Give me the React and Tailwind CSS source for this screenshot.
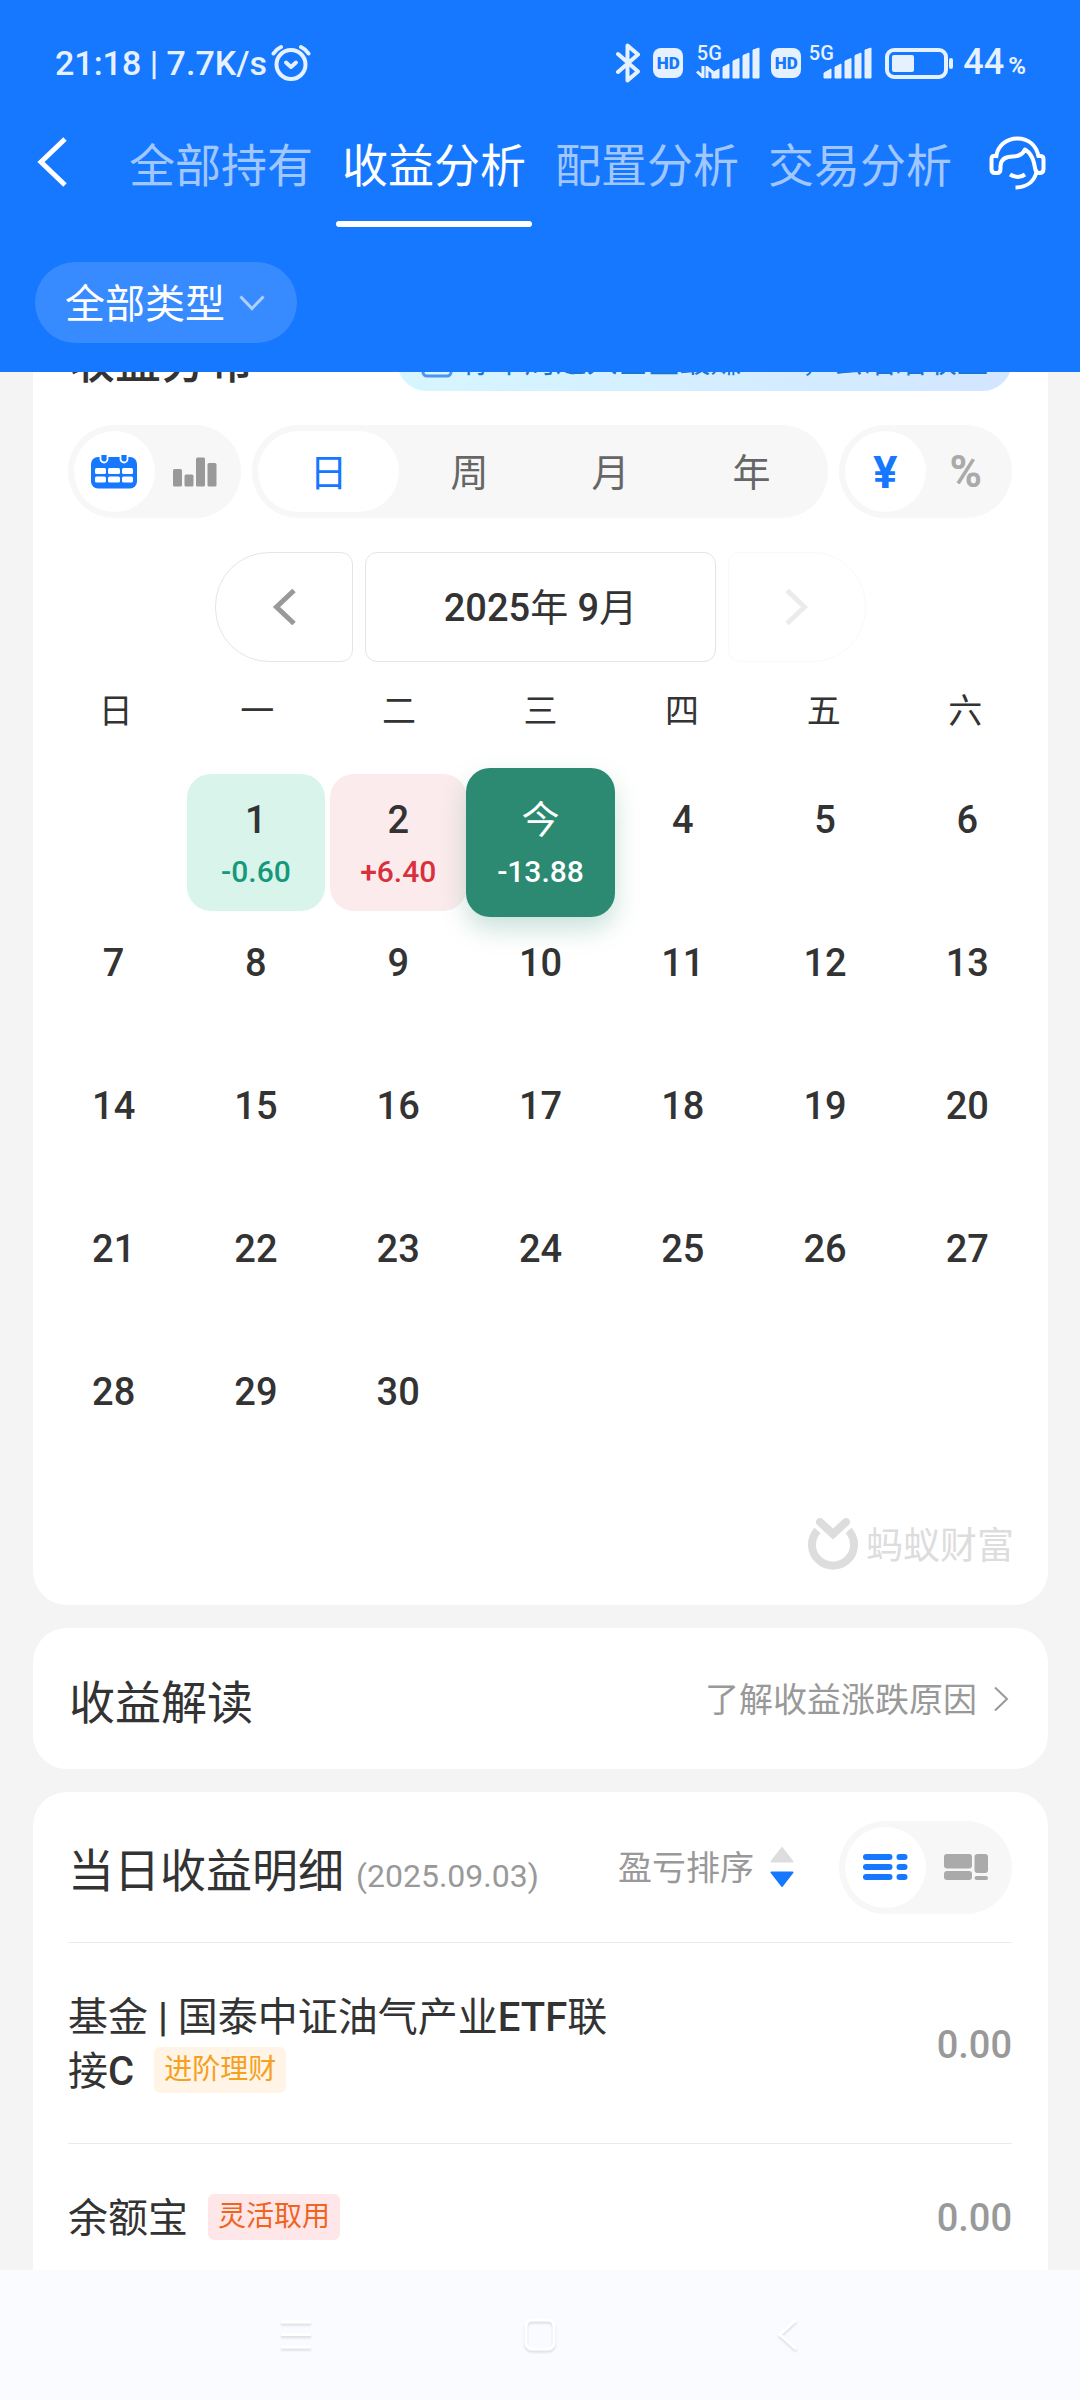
import React from "react";

const BLUE = "#1677ff";

function AlarmIcon() {
  return (
    <svg width="40" height="38" viewBox="0 0 40 38" fill="none" stroke="#e6f1ff" strokeLinecap="round">
      <circle cx="20" cy="20.5" r="14.5" strokeWidth="4" />
      <path d="M2.500 9.500 Q5.500 5 10 3 M37.500 9.500 Q34.500 5 30 3" strokeWidth="4" />
      <path d="M15 18.500 L20 23 L25 18.500" strokeWidth="4" strokeLinejoin="round" />
    </svg>
  );
}

function BluetoothIcon() {
  return (
    <svg width="26" height="40" viewBox="0 0 26 40" fill="none" stroke="#e6f1ff" strokeWidth="4" strokeLinecap="round" strokeLinejoin="round">
      <path d="M3 11 L23 28.500 L12.500 37.500 V2.500 L23 11.500 L3 29" />
    </svg>
  );
}

function HdBadge() {
  return (
    <span className="flex h-[30px] w-[30px] items-center justify-center rounded-lg bg-[#e6f1ff] text-[17px] font-black leading-none text-[#1677ff]">
      HD
    </span>
  );
}

function Signal({ data }) {
  return (
    <span className="flex items-end">
      <span className="-mt-1 flex w-7 flex-col items-center gap-[3px] self-start text-xl font-medium leading-none">
        5G
        {data && (
          <svg className="-ml-2" width="18" height="12" viewBox="0 0 18 12" fill="none" stroke="#e6f1ff" strokeWidth="3">
            <path d="M7 0 V11 L1 5.500 M11 12 V1.500 L17 6.500" />
          </svg>
        )}
      </span>
      <svg className="-ml-3" width="50" height="32" viewBox="0 0 50 32" fill="#e6f1ff">
        <path d="M1 26 L8 22 V31 H1 Z" stroke="#e6f1ff" strokeLinejoin="round" />
        <path d="M12 20 L18 17 V31 H12 Z" stroke="#e6f1ff" strokeLinejoin="round" />
        <path d="M22 14 L28 11.500 V31 H22 Z" stroke="#e6f1ff" strokeLinejoin="round" />
        <path d="M32 8.500 L38 6 V31 H32 Z" stroke="#e6f1ff" strokeLinejoin="round" />
        <path d="M42 3 L48 1 V31 H42 Z" stroke="#e6f1ff" strokeLinejoin="round" />
      </svg>
    </span>
  );
}

function BatteryIcon() {
  return (
    <svg width="70" height="32" viewBox="0 0 70 32" fill="none">
      <rect x="2" y="3" width="59" height="27" rx="7" stroke="#e6f1ff" strokeWidth="4" />
      <rect x="7" y="8" width="22" height="17" rx="2" fill="#e6f1ff" />
      <rect x="64" y="11" width="4" height="11" rx="2" fill="#e6f1ff" />
    </svg>
  );
}

function HeadsetIcon() {
  return (
    <svg width="57" height="54" viewBox="0 0 57 54" fill="none" stroke="#fff" strokeWidth="4" strokeLinejoin="round">
      <path d="M7 22 C8 10 17 2.500 28.500 2.500 C40 2.500 48 10 49.500 21" />
      <path d="M7 20 H5 Q2.500 20 2.500 23 V33 Q2.500 37 6 37 H8 Q11.500 37 11.500 33 V30 Q12 20.500 24 20.500 Q32.500 20.500 36 13.500 Q43 18 45 27 Q46 32 46.500 34 Q47.500 37 50.500 37 Q54.500 37 54.500 33 V23 Q54.500 20 51 20 H48" />
      <path d="M47.500 36 C45 46 37 51.500 26.500 51.500" />
      <path d="M21 38.500 Q29 43.500 36 38.500" />
    </svg>
  );
}

function CalendarIcon() {
  return (
    <svg width="46" height="34" viewBox="0 0 46 34" fill="none">
      <rect x="0" y="2" width="46" height="31.500" rx="7" fill={BLUE} />
      <path d="M9.500 0 V4 A3.500 3.500 0 0 0 16.500 4 V0 M29.500 0 V4 A3.500 3.500 0 0 0 36.500 4 V0" fill={BLUE} stroke="#fff" strokeWidth="1.800" />
      <g fill="#fff">
        <rect x="4" y="13" width="11" height="6" rx="1.500" />
        <rect x="17" y="13" width="12" height="6" rx="1.500" />
        <rect x="31" y="13" width="11" height="6" rx="1.500" />
        <rect x="4" y="21.500" width="11" height="6" rx="1.500" />
        <rect x="17" y="21.500" width="12" height="6" rx="1.500" />
        <rect x="31" y="21.500" width="11" height="6" rx="1.500" />
      </g>
    </svg>
  );
}

function BarsIcon() {
  return (
    <svg width="44" height="30" viewBox="0 0 44 30" fill="#999">
      <rect x="0" y="12" width="9" height="17.500" rx="1.500" />
      <rect x="11.500" y="17.500" width="9" height="12" rx="1.500" />
      <rect x="23" y="0.500" width="9" height="29" rx="1.500" />
      <rect x="34.500" y="6" width="9" height="23.500" rx="1.500" />
    </svg>
  );
}

function ListIcon() {
  return (
    <svg width="46" height="28" viewBox="0 0 46 28" fill={BLUE}>
      {[1, 11, 21].map((y) => (
        <g key={y}>
          <rect x="1" y={y} width="29.500" height="6" rx="3" />
          <rect x="34.500" y={y} width="11" height="6" rx="3" />
        </g>
      ))}
    </svg>
  );
}

function BlocksIcon() {
  return (
    <svg width="44" height="28" viewBox="0 0 44 28" fill="#aaa">
      <rect x="0" y="1" width="28" height="14.500" rx="3" />
      <rect x="0" y="18" width="28" height="9" rx="3" />
      <rect x="30.500" y="1" width="13.500" height="19" rx="3" />
      <rect x="30.500" y="23" width="13.500" height="4" rx="2" />
    </svg>
  );
}

function AntLogo() {
  return (
    <svg width="50" height="52" viewBox="0 0 50 52" fill="none" stroke="#ddd" strokeWidth="8">
      <path d="M9.500 12.500 A21 21 0 1 0 40.500 12.500" />
      <path d="M12 4 L25 16 L38 4" strokeLinecap="round" />
    </svg>
  );
}

function SortIcon() {
  return (
    <svg width="24" height="42" viewBox="0 0 24 42" strokeWidth="2" strokeLinejoin="round">
      <path d="M12 2 L22.500 15.500 H1.500 Z" fill="#ddd" stroke="#ddd" />
      <path d="M12 40 L22.500 26.500 H1.500 Z" fill={BLUE} stroke={BLUE} />
    </svg>
  );
}

function Toggle({ items, label }) {
  return (
    <div role="group" aria-label={label} className="flex h-[93px] w-[173px] shrink-0 rounded-full bg-[#f7f7f7] p-1.5">
      {items.map((it, i) => (
        <button
          key={it.name}
          aria-label={it.name}
          aria-pressed={i === 0}
          className={
            i === 0
              ? "flex flex-1 items-center justify-center rounded-full bg-white font-['Inter','Roboto',sans-serif] text-[44px] font-bold leading-none text-[#1677ff]"
              : "flex flex-1 items-center justify-center rounded-full text-[44px] font-bold leading-none text-[#aaa]"
          }
        >
          {it.icon}
        </button>
      ))}
    </div>
  );
}

const tabs = ["全部持有", "收益分析", "配置分析", "交易分析"];
const periods = ["日", "周", "月", "年"];
const weekdays = ["日", "一", "二", "三", "四", "五", "六"];
const results = {
  1: { value: "-0.60", box: "bg-[#d8f4eb]", text: "text-[#15997a]" },
  2: { value: "+6.40", box: "bg-[#fbebec]", text: "text-[#d9303e]" },
};

function Day({ day }) {
  if (day === 3) {
    return (
      <button className="relative -m-1.5 flex h-[149px] flex-col items-center gap-3 rounded-3xl bg-[#2b8a71] pt-[30px] text-white shadow-[0_12px_24px_rgba(43,138,113,0.25)]">
        <span className="text-[38px] leading-[44px]">今</span>
        <span className="text-[30px] font-medium leading-9">-13.88</span>
      </button>
    );
  }
  const r = results[day];
  return (
    <button className={r ? `flex h-[137px] flex-col items-center gap-3 rounded-3xl pt-6 ${r.box}` : "flex h-[137px] flex-col items-center rounded-3xl pt-6"}>
      <span className="text-[38px] font-medium leading-[44px]">{day}</span>
      {r && <span className={`text-[30px] font-medium leading-9 ${r.text}`}>{r.value}</span>}
    </button>
  );
}

export default function App() {
  return (
    <div className="flex h-screen flex-col overflow-hidden bg-[#f4f4f4] font-['Roboto','Noto_Sans_CJK_SC',sans-serif] text-[#333]">
      <header className="relative z-10 shrink-0 bg-[#1677ff] pb-[29px] text-white">
        <div className="flex h-[126px] items-center justify-between pl-[55px] pr-[54px] text-[#e6f1ff]">
          <div className="flex items-center gap-1 text-[34px] font-medium leading-none">
            <span>21:18 | 7.7K/s</span>
            <AlarmIcon />
          </div>
          <div className="flex items-center gap-3">
            <BluetoothIcon />
            <HdBadge />
            <span className="flex items-center gap-2.5">
              <Signal data />
              <HdBadge />
            </span>
            <span className="-ml-1.5 flex items-center gap-3">
              <Signal />
              <BatteryIcon />
            </span>
            <span className="-ml-1 text-[36px] font-medium leading-none">
              44<span className="ml-1 text-2xl font-bold">%</span>
            </span>
          </div>
        </div>

        <nav className="flex items-center justify-between pl-9 pr-[34px]">
          <button aria-label="返回" className="-mt-[30px]">
            <svg width="32" height="50" viewBox="0 0 32 50" fill="none" stroke="#fff" strokeWidth="5">
              <path d="M29 2 L5 25 L29 48" />
            </svg>
          </button>
          <div className="ml-6 flex gap-[17px]">
            {tabs.map((t) => (
              <a
                key={t}
                href="#"
                className={
                  t === "收益分析"
                    ? "flex h-[101px] flex-col justify-between px-1.5 text-[46px] leading-[80px] text-white"
                    : "flex h-[101px] flex-col justify-between px-1.5 text-[46px] leading-[80px] text-white/60"
                }
              >
                {t}
                {t === "收益分析" && <span className="-mx-1.5 h-1.5 rounded-full bg-white" />}
              </a>
            ))}
          </div>
          <button aria-label="客服" className="-mt-7">
            <HeadsetIcon />
          </button>
        </nav>

        <button className="ml-[35px] mt-[35px] flex h-[81px] items-center gap-3.5 rounded-full bg-white/15 pl-[30px] pr-8 text-[40px] leading-none">
          <span className="pt-1">全部类型</span>
          <svg width="26" height="18" viewBox="0 0 26 18" fill="none" stroke="#fff" strokeOpacity="0.6" strokeWidth="3">
            <path d="M1.500 2.500 L13 14.500 L24.500 2.500" />
          </svg>
        </button>
      </header>

      <main className="-mt-10 flex min-h-0 flex-1 flex-col gap-[23px] overflow-hidden pl-[33px] pr-8">
        <section className="shrink-0 rounded-b-[34px] bg-white pb-[35px]">
          <div className="flex h-[59px] items-center justify-between px-9">
            <h2 className="text-[46px] font-medium leading-none">收益分布</h2>
            <a
              href="#"
              className="flex h-full items-center gap-2.5 rounded-full bg-linear-to-r from-[#d6f6ff] to-[#d2e6ff] px-6 text-[31px] leading-none text-[#1677d8]"
            >
              <svg width="32" height="32" viewBox="0 0 32 32" fill="none" stroke="#4a95f0" strokeWidth="3">
                <rect x="2" y="4" width="28" height="26" rx="4" />
                <path d="M2 12 H30" />
              </svg>
              你本周进入基金最赚5.75，去瞄瞄收益
            </a>
          </div>

          <div className="mt-[34px] flex gap-[11px] pl-[35px] pr-9">
            <Toggle label="视图" items={[{ name: "日历", icon: <CalendarIcon /> }, { name: "柱状图", icon: <BarsIcon /> }]} />
            <div role="group" aria-label="周期" className="flex h-[93px] flex-1 rounded-full bg-[#f7f7f7] p-1.5">
              {periods.map((p, i) => (
                <button
                  key={p}
                  aria-pressed={i === 0}
                  className={
                    i === 0
                      ? "flex-1 rounded-full bg-white pt-0.5 text-[38px] leading-none text-[#1677ff]"
                      : "flex-1 rounded-full pt-0.5 text-[38px] leading-none text-[#666]"
                  }
                >
                  {p}
                </button>
              ))}
            </div>
            <Toggle label="单位" items={[{ name: "金额", icon: "¥" }, { name: "百分比", icon: "%" }]} />
          </div>

          <div className="mt-[34px] flex justify-center gap-3">
            <button aria-label="上个月" className="flex h-[110px] w-[138px] items-center justify-center rounded-l-[54px] rounded-r-xl border border-[#e5e5e5]">
              <svg width="24" height="36" viewBox="0 0 24 36" fill="none" stroke="#999" strokeWidth="5">
                <path d="M22 1.500 L4.500 18 L22 34.500" />
              </svg>
            </button>
            <button className="h-[110px] w-[351px] rounded-xl border border-[#e5e5e5] pt-0.5 text-[38px] leading-none">
              <span className="font-medium">2025</span>年 <span className="font-medium">9</span>月
            </button>
            <button aria-label="下个月" disabled className="flex h-[110px] w-[138px] items-center justify-center rounded-l-xl rounded-r-[54px] border border-[#f9f9f9]">
              <svg width="24" height="36" viewBox="0 0 24 36" fill="none" stroke="#ebebeb" strokeWidth="5">
                <path d="M2 1.500 L19.500 18 L2 34.500" />
              </svg>
            </button>
          </div>

          <div className="mt-6 grid grid-cols-7 px-3 text-center text-[34px] leading-[50px]">
            {weekdays.map((d) => (
              <span key={d}>{d}</span>
            ))}
          </div>

          <div className="mt-[38px] grid grid-cols-7 gap-x-[5px] gap-y-1.5 px-3">
            <span />
            {Array.from({ length: 30 }, (_, i) => (
              <Day key={i} day={i + 1} />
            ))}
          </div>

          <div className="mt-[35px] flex items-center justify-end gap-2 px-[34px] text-[37px] leading-none text-[#ddd]">
            <AntLogo />
            <span className="pt-1">蚂蚁财富</span>
          </div>
        </section>

        <section className="flex h-[141px] shrink-0 items-center justify-between rounded-[34px] bg-white px-9">
          <h2 className="pt-2 text-[46px] leading-none">收益解读</h2>
          <a href="#" className="flex items-center gap-4 text-[34px] leading-none text-[#999]">
            <span className="pt-0.5">了解收益涨跌原因</span>
            <svg width="19" height="26" viewBox="0 0 19 26" fill="none" stroke="#999" strokeWidth="2">
              <path d="M2 1.500 L14 13 L2 24.500" />
            </svg>
          </a>
        </section>

        <section className="shrink-0 rounded-t-[34px] bg-white pl-[35px] pr-9">
          <div className="flex h-[150px] items-center justify-between">
            <h2 className="flex items-baseline gap-3 pt-2 text-[46px] leading-none">
              当日收益明细
              <span className="text-[32px] text-[#999]">(2025.09.03)</span>
            </h2>
            <div className="flex items-center gap-[45px]">
              <button className="flex items-center gap-4 text-[34px] leading-none text-[#999]">
                <span className="pt-0.5">盈亏排序</span>
                <SortIcon />
              </button>
              <Toggle label="明细样式" items={[{ name: "列表", icon: <ListIcon /> }, { name: "方块", icon: <BlocksIcon /> }]} />
            </div>
          </div>
          <ul>
            <li className="flex h-[201px] items-center justify-between border-t border-[#ebebeb]">
              <div className="pt-1 text-[40px] leading-[54px]">
                <p>
                  基金 <span className="font-medium">|</span> 国泰中证油气产业<span className="font-medium">ETF</span>联
                </p>
                <p className="flex items-center">
                  接<span className="font-medium">C</span>
                  <span className="-mt-1 ml-5 inline-flex h-[46px] items-center rounded-md bg-[#fff4e5] px-2.5 text-[28px] leading-none text-[#f5a020]">
                    进阶理财
                  </span>
                </p>
              </div>
              <span className="pt-1 text-[38px] font-medium text-[#999]">0.00</span>
            </li>
            <li className="flex h-[150px] items-center justify-between border-t border-[#ebebeb]">
              <p className="flex items-center text-[40px] leading-[54px]">
                余额宝
                <span className="-mt-1 ml-5 inline-flex h-[46px] items-center rounded-md bg-[#ffe7e9] px-2.5 text-[28px] leading-none text-[#f0641e]">
                  灵活取用
                </span>
              </p>
              <span className="text-[38px] font-medium text-[#999]">0.00</span>
            </li>
          </ul>
        </section>
      </main>

      <footer className="relative grid h-[130px] shrink-0 grid-cols-[1fr_auto_1fr] items-center bg-[#fafbfe]">
        <button aria-label="最近任务" className="mr-[210px] justify-self-end">
          <svg className="drop-shadow-[0_2px_1px_rgba(0,0,0,0.12)]" width="32" height="36" viewBox="0 0 32 36" stroke="#fff" strokeWidth="3">
            <path d="M1 5 H31 M1 17.500 H31 M1 30 H31" />
          </svg>
        </button>
        <button aria-label="主屏幕">
          <svg className="drop-shadow-[0_2px_1px_rgba(0,0,0,0.12)]" width="36" height="38" viewBox="0 0 36 38" fill="none" stroke="#fff" strokeWidth="3">
            <rect x="4" y="4" width="28" height="29" rx="6" />
          </svg>
        </button>
        <button aria-label="返回上一级" className="ml-[218px] justify-self-start">
          <svg className="drop-shadow-[0_2px_1px_rgba(0,0,0,0.12)]" width="24" height="36" viewBox="0 0 24 36" fill="none" stroke="#fff" strokeWidth="3">
            <path d="M20 3 L4 17.500 L20 32" />
          </svg>
        </button>
      </footer>
    </div>
  );
}
